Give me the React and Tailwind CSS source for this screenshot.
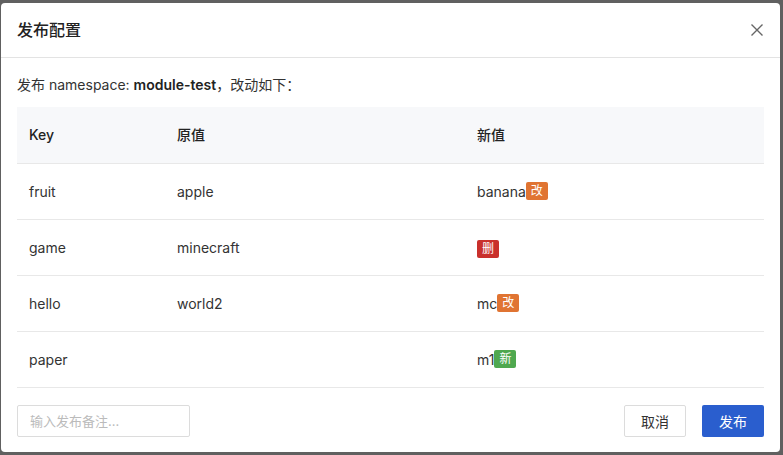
import React from "react";

const rows = [
  { key: "fruit", oldValue: "apple", newValue: "banana", tag: "改" },
  { key: "game", oldValue: "minecraft", newValue: "", tag: "删" },
  { key: "hello", oldValue: "world2", newValue: "mc", tag: "改" },
  { key: "paper", oldValue: "", newValue: "m1", tag: "新" },
];

function Tag({ type }) {
  const color =
    type === "删" ? "bg-[#c9302c]" : type === "新" ? "bg-[#4fa84f]" : "bg-[#e07432]";
  return (
    <span
      className={`inline-flex h-[18px] items-center rounded-[2px] px-[5px] text-[12px] leading-none text-white ${color}`}
    >
      {type}
    </span>
  );
}

export default function App() {
  return (
    <div
      className="flex h-[455px] w-full bg-[#606060] pb-[3px] pl-[1px] pr-[3px] pt-[3px]"
      style={{ fontFamily: 'Inter, "Noto Sans CJK SC", sans-serif' }}
    >
      <div className="flex flex-1 flex-col rounded-[4px] bg-white text-[#333]">
        {/* Header */}
        <div className="flex h-[55px] items-center justify-between border-b border-[#e3e3e3] pl-4 pr-4">
          <h2 className="text-[16px] font-medium text-[#222]">发布配置</h2>
          <button className="text-[#666]" aria-label="close">
            <svg width="14" height="14" viewBox="0 0 14 14" stroke="currentColor" strokeWidth="1.4">
              <path d="M1.5 1.5 L12.5 12.5 M12.5 1.5 L1.5 12.5" />
            </svg>
          </button>
        </div>

        {/* Body */}
        <div className="px-4 pt-[17px]">
          <p className="text-[14px] leading-[20px] text-[#333]">
            发布 namespace: <span className="font-semibold text-[#222]">module-test</span>，改动如下：
          </p>

          <table className="mt-[12px] w-full table-fixed text-[14px]">
            <thead>
              <tr className="h-[56px] border-b border-[#e8e8e8] bg-[#f7f8fa] text-left">
                <th className="w-[148px] pl-3 font-medium text-[#222]">Key</th>
                <th className="w-[300px] pl-3 font-medium text-[#222]">原值</th>
                <th className="pl-3 font-medium text-[#222]">新值</th>
              </tr>
            </thead>
            <tbody>
              {rows.map((r) => (
                <tr key={r.key} className="h-[56px] border-b border-[#e8e8e8]">
                  <td className="pl-3">{r.key}</td>
                  <td className="pl-3">{r.oldValue}</td>
                  <td className="pl-3">
                    <span className="inline-flex items-center">
                      {r.newValue}
                      <Tag type={r.tag} />
                    </span>
                  </td>
                </tr>
              ))}
            </tbody>
          </table>
        </div>

        {/* Footer */}
        <div className="mt-auto flex items-center justify-between px-4 pb-[15px]">
          <input
            placeholder="输入发布备注..."
            className="h-[32px] w-[173px] rounded-[2px] border border-[#dcdcdc] px-3 text-[13px] placeholder:text-[#bbb] outline-none"
          />
          <div className="flex gap-4">
            <button className="h-[32px] w-[62px] rounded-[2px] border border-[#dcdcdc] text-[14px] text-[#333]">
              取消
            </button>
            <button className="h-[32px] w-[62px] rounded-[2px] bg-[#2a5ece] text-[14px] text-white">
              发布
            </button>
          </div>
        </div>
      </div>
    </div>
  );
}
